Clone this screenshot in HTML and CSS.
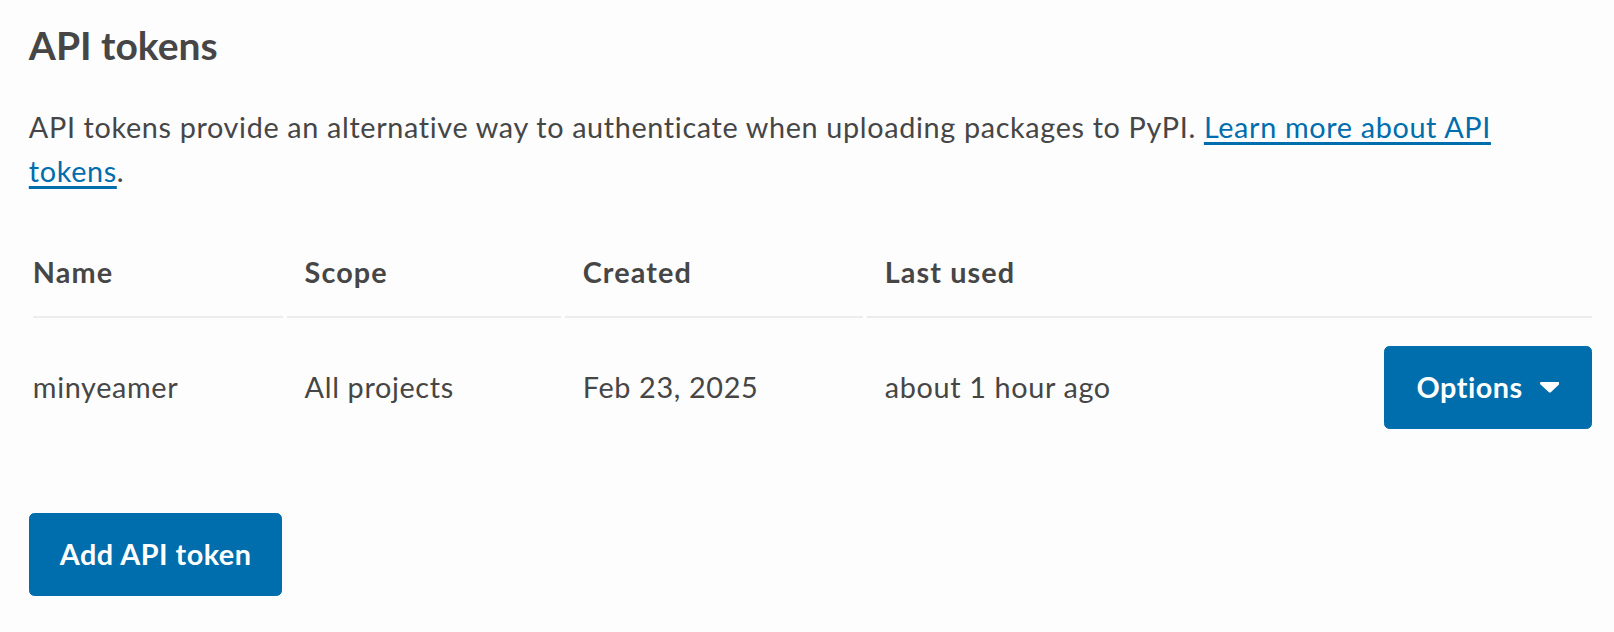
FILE: index.html
```html
<!DOCTYPE html>
<html lang="en">
<head>
<meta charset="utf-8">
<title>API tokens</title>
<link rel="stylesheet" href="styles.css">
</head>
<body>
<section class="tokens-section">
  <h2 class="title">API tokens</h2>
  <p class="intro">API tokens provide an alternative way to authenticate when uploading packages to PyPI. <a class="link" href="#">Learn more about API tokens</a>.</p>
  <table class="tokens">
    <colgroup>
      <col class="c-name">
      <col class="c-scope">
      <col class="c-created">
      <col class="c-used">
      <col class="c-actions">
    </colgroup>
    <thead>
      <tr>
        <th>Name</th>
        <th>Scope</th>
        <th>Created</th>
        <th colspan="2">Last used</th>
      </tr>
    </thead>
    <tbody>
      <tr>
        <td>minyeamer</td>
        <td>All projects</td>
        <td>Feb 23, 2025</td>
        <td>about 1 hour ago</td>
        <td class="actions">
          <button class="button options" type="button">Options
            <svg class="caret" viewBox="13 192 290 168" preserveAspectRatio="none" aria-hidden="true"><path d="M31.3 192h257.3c17.8 0 26.7 21.5 14.1 34.1L174.1 354.8c-7.8 7.8-20.5 7.8-28.3 0L17.2 226.1C4.6 213.5 13.5 192 31.3 192z" fill="#ffffff"/></svg>
          </button>
        </td>
      </tr>
    </tbody>
  </table>
  <button class="button add" type="button">Add API token</button>
</section>
</body>
</html>
```

FILE: styles.css
```css
html, body {
  margin: 0;
  padding: 0;
  background: #fdfdfd;
}

body {
  font-family: Lato, "Open Sans", sans-serif;
  font-size: 28.8px;
  line-height: 1.5;
  color: #464646;
  letter-spacing: 0.65px;
}

.tokens-section {
  padding: 0 18px 0 28.8px;
}

.title {
  margin: 0;
  padding-top: 21px;
  font-size: 39px;
  font-weight: 700;
  line-height: 1.25;
  letter-spacing: 0;
}

.intro {
  margin: 35px 60px 0 0;
  line-height: 44px;
}

.link {
  color: #006dad;
  text-decoration: underline;
  text-decoration-thickness: 2.5px;
  text-underline-offset: 4px;
}

.tokens {
  width: 100%;
  margin-top: 44px;
  border-collapse: separate;
  border-spacing: 4.5px 0;
  table-layout: fixed;
}

.c-name { width: 249.4px; }
.c-scope { width: 273.7px; }
.c-created { width: 297.5px; }
.c-used { width: 511.6px; }
.c-actions { width: 208.4px; }

.tokens th {
  text-align: left;
  font-weight: 700;
  letter-spacing: 1.1px;
  padding: 14px 1px 22px 18px;
  border-bottom: 2px solid #ececec;
  line-height: 43.2px;
}

.tokens td {
  padding: 28px 1px 28px 18px;
  vertical-align: middle;
  line-height: 43.2px;
}

.tokens th:first-child,
.tokens td:first-child {
  padding-left: 0;
}

.tokens td.actions {
  padding-left: 0;
  padding-right: 0;
  text-align: right;
}

.button {
  display: inline-flex;
  align-items: center;
  justify-content: center;
  box-sizing: border-box;
  height: 82.8px;
  padding: 0 30px;
  border: 1.8px solid #006dad;
  border-radius: 5.4px;
  background: #006dad;
  color: #ffffff;
  font-family: inherit;
  font-size: 28.8px;
  font-weight: 700;
  letter-spacing: 0.5px;
  cursor: pointer;
}

.options {
  width: 208.4px;
  gap: 17px;
}

.caret {
  width: 19.4px;
  height: 10.5px;
}

.add {
  margin-top: 56px;
  width: 253.7px;
}
```
